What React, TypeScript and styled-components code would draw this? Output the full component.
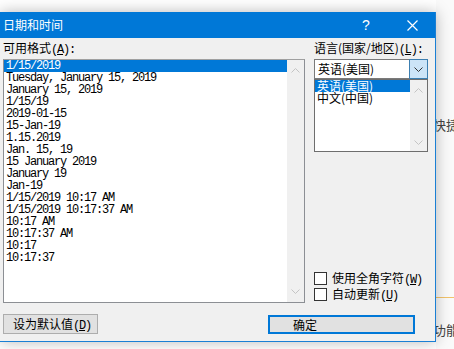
import styled, { createGlobalStyle } from "styled-components";

const GlobalStyle = createGlobalStyle`
  html, body {
    margin: 0;
    padding: 0;
    background: #fff;
  }
  body {
    font-family: "Noto Sans CJK SC", "Noto Sans", sans-serif;
    overflow: hidden;
  }
`;

const formats = [
  "1/15/2019",
  "Tuesday, January 15, 2019",
  "January 15, 2019",
  "1/15/19",
  "2019-01-15",
  "15-Jan-19",
  "1.15.2019",
  "Jan. 15, 19",
  "15 January 2019",
  "January 19",
  "Jan-19",
  "1/15/2019 10:17 AM",
  "1/15/2019 10:17:37 AM",
  "10:17 AM",
  "10:17:37 AM",
  "10:17",
  "10:17:37",
];

const languages = ["英语(美国)", "中文(中国)"];

const Desk = styled.div`
  display: grid;
  grid-template-columns: 436px 18px;
  width: 454px;
  height: 349px;
  overflow: hidden;
`;

const Dialog = styled.div`
  box-sizing: border-box;
  margin-top: 12px;
  height: 330px;
  display: flex;
  flex-direction: column;
  background: #f0f0f0;
  border-right: 1px solid #1a7fd4;
  border-bottom: 1px solid #1a7fd4;
  box-shadow: 0 0 14px rgba(0, 0, 0, 0.28);
  position: relative;
  z-index: 1;
`;

const TitleBar = styled.div`
  height: 26px;
  display: flex;
  align-items: center;
  background: #0078d7;
  color: #fff;
  font-size: 12px;
  padding-left: 3px;
`;

const Title = styled.div`
  flex: 1;
  line-height: 16px;
`;

const TitleButton = styled.div`
  width: 46px;
  height: 26px;
  display: flex;
  align-items: center;
  justify-content: center;
  font-family: "Liberation Sans", sans-serif;
  font-size: 14px;
`;

const Body = styled.div`
  flex: 1;
  display: grid;
  grid-template-columns: 302px 114px;
  grid-template-rows: 21px 244px auto;
  column-gap: 9px;
  padding-left: 3px;
`;

const Label = styled.div`
  font-size: 12px;
  line-height: 14px;
  padding-top: 3px;
  color: #000;
  white-space: nowrap;
`;

const Acc = styled.span`
  font-family: "Liberation Mono", monospace;
  letter-spacing: -1.2px;
`;

const ListBox = styled.div<{ $height: number }>`
  box-sizing: border-box;
  height: ${(p) => p.$height}px;
  display: flex;
  background: #fff;
  border: 1px solid ${(p) => (p.$height > 100 ? "#8c8f94" : "#6e6e6e")};
  border-top-color: ${(p) => (p.$height > 100 ? "#a0a0a0" : "#6e6e6e")};
`;

const Rows = styled.div`
  flex: 1;
  display: flex;
  flex-direction: column;
`;

const Row = styled.div<{ $selected?: boolean; $mono?: boolean }>`
  height: 12px;
  line-height: 12px;
  font-size: 12px;
  white-space: nowrap;
  padding-left: 2px;
  font-family: ${(p) =>
    p.$mono
      ? `"Liberation Mono", monospace`
      : `"Noto Sans CJK SC", sans-serif`};
  letter-spacing: ${(p) => (p.$mono ? "-1.2px" : "0")};
  background: ${(p) => (p.$selected ? "#0078d7" : "transparent")};
  color: ${(p) => (p.$selected ? "#fff" : "#000")};
`;

const ScrollBar = styled.div<{ $top: number; $bottom: number }>`
  width: 17px;
  background: #f0f0f0;
  display: flex;
  flex-direction: column;
  align-items: center;
  justify-content: space-between;
  padding: ${(p) => p.$top}px 0 ${(p) => p.$bottom}px;
`;

const RightColumn = styled.div`
  display: flex;
  flex-direction: column;
`;

const Combo = styled.div`
  box-sizing: border-box;
  height: 20px;
  display: flex;
  background: #fff;
  border: 1px solid #7a7a7a;
`;

const ComboText = styled.div`
  flex: 1;
  font-size: 12px;
  line-height: 18px;
  padding-left: 3px;
`;

const ComboButton = styled.div`
  box-sizing: border-box;
  width: 19px;
  margin: -1px -1px -1px 0;
  display: flex;
  align-items: center;
  justify-content: center;
  background: #cce4f7;
  border: 1px solid #3c7fb1;
`;

const Checks = styled.div`
  margin-top: auto;
  padding-bottom: 1px;
  display: flex;
  flex-direction: column;
`;

const CheckRow = styled.div`
  height: 16px;
  display: flex;
  align-items: center;
  gap: 5px;
  font-size: 12px;
  white-space: nowrap;
`;

const Box = styled.div`
  box-sizing: border-box;
  width: 13px;
  height: 13px;
  background: #fff;
  border: 1px solid #333;
`;

const ButtonRow = styled.div`
  grid-column: 1 / -1;
  display: flex;
  justify-content: space-between;
  align-items: flex-start;
  margin-top: 11px;
  padding-right: 13px;
`;

const Button = styled.div<{ $primary?: boolean; $width: number }>`
  box-sizing: border-box;
  width: ${(p) => p.$width}px;
  height: ${(p) => (p.$primary ? 19 : 20)}px;
  margin-top: ${(p) => (p.$primary ? 1 : 0)}px;
  background: #e1e1e1;
  border: ${(p) => (p.$primary ? "2px solid #0078d7" : "1px solid #adadad")};
  font-size: 12px;
  line-height: ${(p) => (p.$primary ? 15 : 18)}px;
  padding-left: ${(p) => (p.$primary ? 23 : 9)}px;
  white-space: nowrap;
`;

const Side = styled.div`
  display: flex;
  flex-direction: column;
  background: #fafafa;
  color: #444;
  font-size: 13px;
`;

const SideText = styled.div<{ $top: number }>`
  margin-top: ${(p) => p.$top}px;
  margin-left: -3px;
  line-height: 16px;
  white-space: nowrap;
`;

const OrangeLine = styled.div`
  margin-top: 164px;
  height: 1px;
  background: #f2c36b;
`;

function Chevron({ dir, color }: { dir: "up" | "down"; color: string }) {
  const points = dir === "up" ? "0.5,4.5 4.5,0.5 8.5,4.5" : "0.5,0.5 4.5,4.5 8.5,0.5";
  return (
    <svg width="9" height="5" viewBox="0 0 9 5">
      <polyline points={points} fill="none" stroke={color} strokeWidth="1" />
    </svg>
  );
}

function CloseIcon() {
  return (
    <svg width="11" height="11" viewBox="0 0 11 11">
      <path d="M0.5 0.5 L10.5 10.5 M10.5 0.5 L0.5 10.5" stroke="#fff" strokeWidth="1.2" />
    </svg>
  );
}

export default function App() {
  return (
    <>
      <GlobalStyle />
      <Desk>
        <Dialog>
          <TitleBar>
            <Title>日期和时间</Title>
            <TitleButton>?</TitleButton>
            <TitleButton>
              <CloseIcon />
            </TitleButton>
          </TitleBar>
          <Body>
            <Label>
              可用格式
              <Acc>
                (<u>A</u>):
              </Acc>
            </Label>
            <Label>
              语言(国家/地区)
              <Acc>
                (<u>L</u>):
              </Acc>
            </Label>

            <ListBox $height={244}>
              <Rows>
                {formats.map((f, i) => (
                  <Row key={f} $mono $selected={i === 0}>
                    {f}
                  </Row>
                ))}
              </Rows>
              <ScrollBar $top={8} $bottom={8}>
                <Chevron dir="up" color="#c4c4c4" />
                <Chevron dir="down" color="#c4c4c4" />
              </ScrollBar>
            </ListBox>

            <RightColumn>
              <Combo>
                <ComboText>英语(美国)</ComboText>
                <ComboButton>
                  <Chevron dir="down" color="#333" />
                </ComboButton>
              </Combo>
              <ListBox $height={73}>
                <Rows>
                  {languages.map((l, i) => (
                    <Row key={l} $selected={i === 0}>
                      {l}
                    </Row>
                  ))}
                </Rows>
                <ScrollBar $top={8} $bottom={6}>
                  <Chevron dir="up" color="#c4c4c4" />
                  <Chevron dir="down" color="#c4c4c4" />
                </ScrollBar>
              </ListBox>
              <Checks>
                <CheckRow>
                  <Box />
                  <span>
                    使用全角字符
                    <Acc>
                      (<u>W</u>)
                    </Acc>
                  </span>
                </CheckRow>
                <CheckRow>
                  <Box />
                  <span>
                    自动更新
                    <Acc>
                      (<u>U</u>)
                    </Acc>
                  </span>
                </CheckRow>
              </Checks>
            </RightColumn>

            <ButtonRow>
              <Button $width={95}>
                设为默认值
                <Acc>
                  (<u>D</u>)
                </Acc>
              </Button>
              <Button $width={147} $primary>
                确定
              </Button>
            </ButtonRow>
          </Body>
        </Dialog>
        <Side>
          <SideText $top={117}>快捷</SideText>
          <OrangeLine />
          <SideText $top={24}>功能</SideText>
        </Side>
      </Desk>
    </>
  );
}
